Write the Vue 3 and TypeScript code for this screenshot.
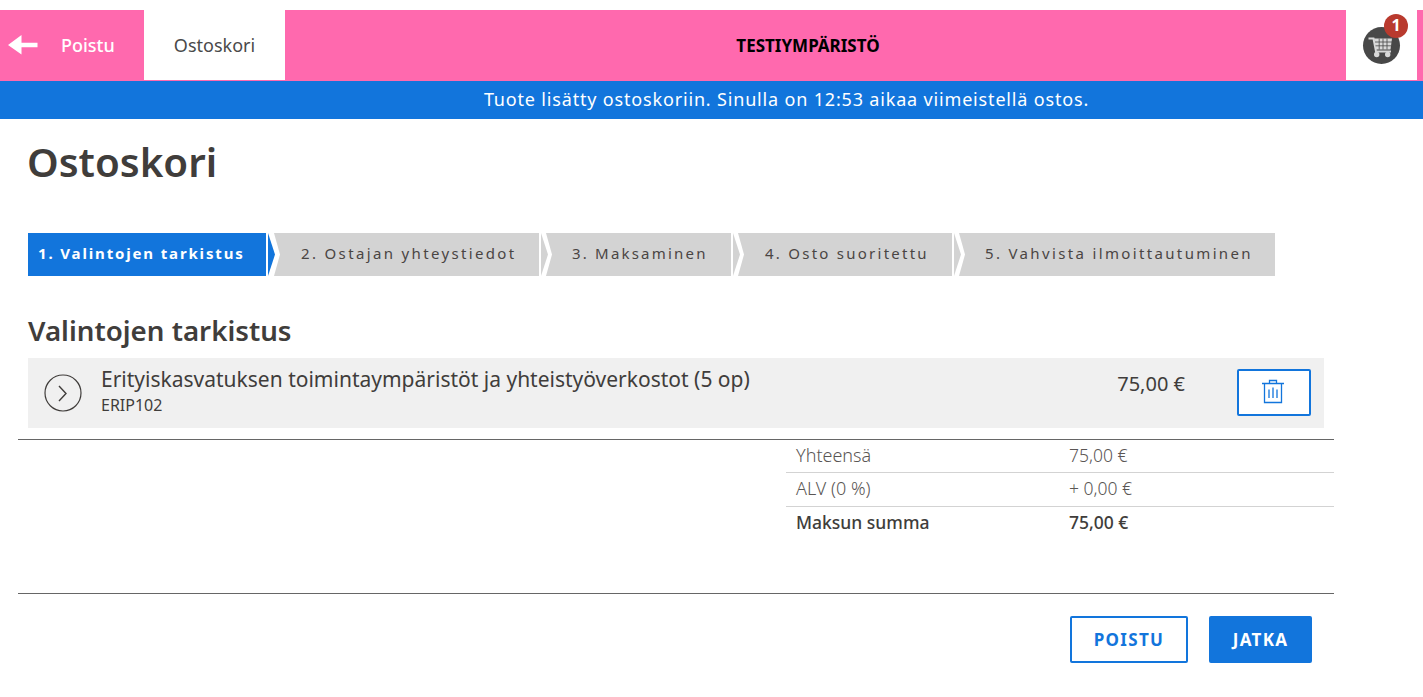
<script setup lang="ts">
interface Step { label: string; width: number; active?: boolean }
const steps: Step[] = [
  { label: '1. Valintojen tarkistus', width: 238, active: true },
  { label: '2. Ostajan yhteystiedot', width: 265 },
  { label: '3. Maksaminen', width: 185 },
  { label: '4. Osto suoritettu', width: 214 },
  { label: '5. Vahvista ilmoittautuminen', width: 316 },
]
</script>

<template>
  <div class="page">
    <header class="topbar">
      <a class="back">
        <svg class="back-arrow" width="30" height="20" viewBox="0 0 30 20">
          <path d="M0 10 L13.5 0 V7.7 H29.5 V12.3 H13.5 V19.5 Z" fill="#fff" />
        </svg>
        <span>Poistu</span>
      </a>
      <div class="tab">Ostoskori</div>
      <div class="env">TESTIYMPÄRISTÖ</div>
      <div class="cart">
        <div class="cart-circle">
          <svg width="24" height="21" viewBox="0 0 24 21">
            <path d="M0.5 1.5 H5.5 L8 14.5 H23" fill="none" stroke="#d8d8d8" stroke-width="2" />
            <path d="M6 1.5 H24 L22.5 12.5 H8 Z" fill="#d8d8d8" />
            <path d="M7 5 H24 M7.5 8.8 H23 M11.2 1.5 V12.5 M15 1.5 V12.5 M19 1.5 V12.5" stroke="#484848" stroke-width="0.8" fill="none" />
            <circle cx="8.7" cy="17.5" r="2.7" fill="#d8d8d8" />
            <circle cx="19.7" cy="17.5" r="2.7" fill="#d8d8d8" />
          </svg>
        </div>
        <div class="badge">1</div>
      </div>
    </header>
    <div class="notice">Tuote lisätty ostoskoriin. Sinulla on 12:53 aikaa viimeistellä ostos.</div>

    <main class="content">
      <h1>Ostoskori</h1>

      <ol class="steps">
        <li
          v-for="s in steps"
          :key="s.label"
          class="step"
          :class="{ active: s.active }"
          :style="{ width: s.width + 'px' }"
        >
          <span class="step-label">{{ s.label }}</span>
        </li>
      </ol>

      <h2>Valintojen tarkistus</h2>

      <section class="item">
        <div class="expand">
          <svg width="38" height="38" viewBox="0 0 38 38">
            <circle cx="19" cy="19" r="18" fill="none" stroke="#403d3b" stroke-width="1.2" />
            <path d="M15 12 L22 19.5 L15 27" fill="none" stroke="#403d3b" stroke-width="1.4" />
          </svg>
        </div>
        <div class="item-text">
          <div class="item-name">Erityiskasvatuksen toimintaympäristöt ja yhteistyöverkostot (5 op)</div>
          <div class="item-code">ERIP102</div>
        </div>
        <div class="item-price">75,00 €</div>
        <button class="trash" type="button" aria-label="Poista">
          <svg width="24" height="25" viewBox="0 0 24 25">
            <path d="M1 4.5 H23 M8.5 4.5 V1.5 H15.5 V4.5" fill="none" stroke="#1275dc" stroke-width="1.3" />
            <path d="M3.5 4.5 V23.5 H20.5 V4.5" fill="none" stroke="#1275dc" stroke-width="1.3" />
            <path d="M8 10.5 V19 M12 8.5 V19 M16 10.5 V19" fill="none" stroke="#1275dc" stroke-width="1.3" />
          </svg>
        </button>
      </section>

      <div class="summary-wrap">
        <table class="summary">
          <tbody>
            <tr><td class="lbl">Yhteensä</td><td class="val">75,00 €</td></tr>
            <tr><td class="lbl">ALV (0 %)</td><td class="val">+ 0,00 €</td></tr>
            <tr class="total"><td class="lbl">Maksun summa</td><td class="val">75,00 €</td></tr>
          </tbody>
        </table>
      </div>

      <div class="actions">
        <button class="btn outline" type="button">POISTU</button>
        <button class="btn solid" type="button">JATKA</button>
      </div>
    </main>
  </div>
</template>

<style>
html, body { margin: 0; background: #fff; }
</style>

<style scoped>
.page {
  font-family: "Noto Sans", "Open Sans", sans-serif;
  color: #403d3b;
  padding-top: 10px;
  overflow: hidden;
}
.topbar {
  display: flex;
  height: 71px;
  background: #ff69ae;
  padding-right: 6px;
  box-sizing: border-box;
}
.back {
  width: 144px;
  display: flex;
  align-items: center;
  color: #fff;
  font-size: 18px;
  font-weight: 500;
  padding: 0 0 1px 8px;
  box-sizing: border-box;
}
.back-arrow { margin-right: 23px; }
.tab {
  width: 141px;
  height: 70px;
  background: #fff;
  display: flex;
  align-items: center;
  justify-content: center;
  font-size: 18px;
  color: #4a4a4a;
}
.env {
  flex: 1;
  display: flex;
  align-items: center;
  justify-content: center;
  color: #000;
  font-weight: 700;
  font-size: 17px;
  padding: 0 15px 1px 0;
}
.cart {
  width: 71px;
  height: 70px;
  background: #fff;
  position: relative;
}
.cart-circle {
  position: absolute;
  left: 17px;
  top: 17px;
  width: 37px;
  height: 37px;
  border-radius: 50%;
  background: #484848;
  box-sizing: border-box;
  padding: 10px 0 0 5px;
}
.cart-circle svg { display: block; }
.badge {
  position: absolute;
  left: 38px;
  top: 4px;
  width: 24px;
  height: 24px;
  border-radius: 50%;
  background: #b93a2e;
  color: #fff;
  font-weight: 700;
  font-size: 16px;
  line-height: 23px;
  text-align: center;
}
.notice {
  height: 38px;
  background: #1275dc;
  color: #fff;
  font-size: 18px;
  line-height: 36px;
  text-align: center;
  letter-spacing: 0.83px;
  padding-left: 150px;
  box-sizing: border-box;
}
.content {
  padding: 0 89px 0 18px;
}
h1 {
  margin: 0;
  padding: 13px 0 0 9px;
  height: 114px;
  box-sizing: border-box;
  font-size: 40.3px;
  line-height: 60px;
  font-weight: 600;
}
.steps {
  list-style: none;
  display: flex;
  gap: 7px;
  margin: 0 0 0 10px;
  padding: 0;
  height: 43px;
}
.step {
  --top: 7px;
  --tip: 13px;
  position: relative;
  height: 43px;
  background: #d3d3d3;
  box-sizing: border-box;
  font-size: 15px;
  letter-spacing: 2.35px;
  line-height: 41px;
  color: #4a4543;
  padding-left: 27px;
  white-space: nowrap;
}
.step:first-child { padding-left: 10px; margin-right: 1px; }
.step:nth-child(3) { padding-left: 26px; letter-spacing: 2.2px; }
.step:nth-child(4) { letter-spacing: 2.25px; }
.step:last-child { padding-left: 26px; }
.step.active {
  --top: 8px;
  --tip: 14px;
  background: #1275dc;
  color: #fff;
  font-weight: 700;
  letter-spacing: 1.85px;
}
.step:not(:last-child)::before {
  content: "";
  position: absolute;
  left: 100%;
  top: 0;
  width: var(--tip);
  height: 43px;
  z-index: 1;
  background: #fff;
  clip-path: polygon(0 0, var(--top) 0, var(--tip) 50%, var(--top) 100%, 0 100%);
}
.step:not(:last-child)::after {
  content: "";
  position: absolute;
  left: calc(100% + 2px);
  top: 0;
  width: 7px;
  height: 43px;
  z-index: 2;
  background: inherit;
  clip-path: polygon(0 0, 100% 50%, 0 100%);
}
h2 {
  margin: 0;
  padding-top: 37px;
  padding-left: 10px;
  height: 82px;
  box-sizing: border-box;
  font-size: 27.7px;
  line-height: 35px;
  font-weight: 600;
}
.item {
  margin-left: 10px;
  width: 1296px;
  height: 70px;
  background: #f0f0f0;
  display: flex;
  align-items: flex-start;
  position: relative;
}
.expand {
  width: 73px;
  padding: 16px 0 0 16px;
  box-sizing: border-box;
  flex: none;
}
.expand svg { display: block; }
.item-text { flex: 1; padding-top: 7px; white-space: nowrap; }
.item-name { font-size: 21px; line-height: 28px; color: #403d3b; }
.item-code { font-size: 16px; line-height: 22px; margin-top: 1px; }
.item-price {
  width: 100px;
  text-align: right;
  padding-top: 12px;
  font-size: 20px;
  line-height: 28px;
  margin-right: 52px;
}
.trash {
  width: 74px;
  height: 47px;
  margin: 11px 13px 0 0;
  padding: 0 2px 2px 0;
  border: 2px solid #1275dc;
  border-radius: 2px;
  background: #fff;
  display: flex;
  align-items: center;
  justify-content: center;
  flex: none;
}
.summary-wrap {
  margin-top: 11px;
  width: 1316px;
  height: 155px;
  border-top: 1px solid #666;
  border-bottom: 1px solid #666;
  box-sizing: border-box;
  display: flex;
  justify-content: flex-end;
}
.summary {
  width: 548px;
  height: 99px;
  border-collapse: collapse;
  table-layout: fixed;
  font-size: 18px;
  font-weight: 300;
  align-self: flex-start;
}
.summary td { padding: 0 0 2px 10px; height: 34px; box-sizing: border-box; border-bottom: 1px solid #d3d3d3; }
.summary tr:first-child td { height: 32px; }
.summary tr:last-child td { border-bottom: 0; height: 33px; }
.lbl { width: 273px; color: #5a5654; }
.val { color: #5a5654; font-size: 17.5px; }
.total .lbl, .total .val { color: #403d3b; font-weight: 500; }
.total .lbl { font-size: 17.5px; }
.total .val { font-size: 17.5px; }
.actions {
  width: 1294px;
  display: flex;
  justify-content: flex-end;
  gap: 21px;
  padding-top: 22px;
}
.btn {
  height: 47px;
  box-sizing: border-box;
  border: 2px solid #1275dc;
  border-radius: 2px;
  font-family: inherit;
  font-size: 17px;
  font-weight: 700;
  letter-spacing: 1.3px;
  padding: 0;
}
.outline { width: 118px; background: #fff; color: #1275dc; }
.solid { width: 103px; background: #1275dc; color: #fff; }
</style>
